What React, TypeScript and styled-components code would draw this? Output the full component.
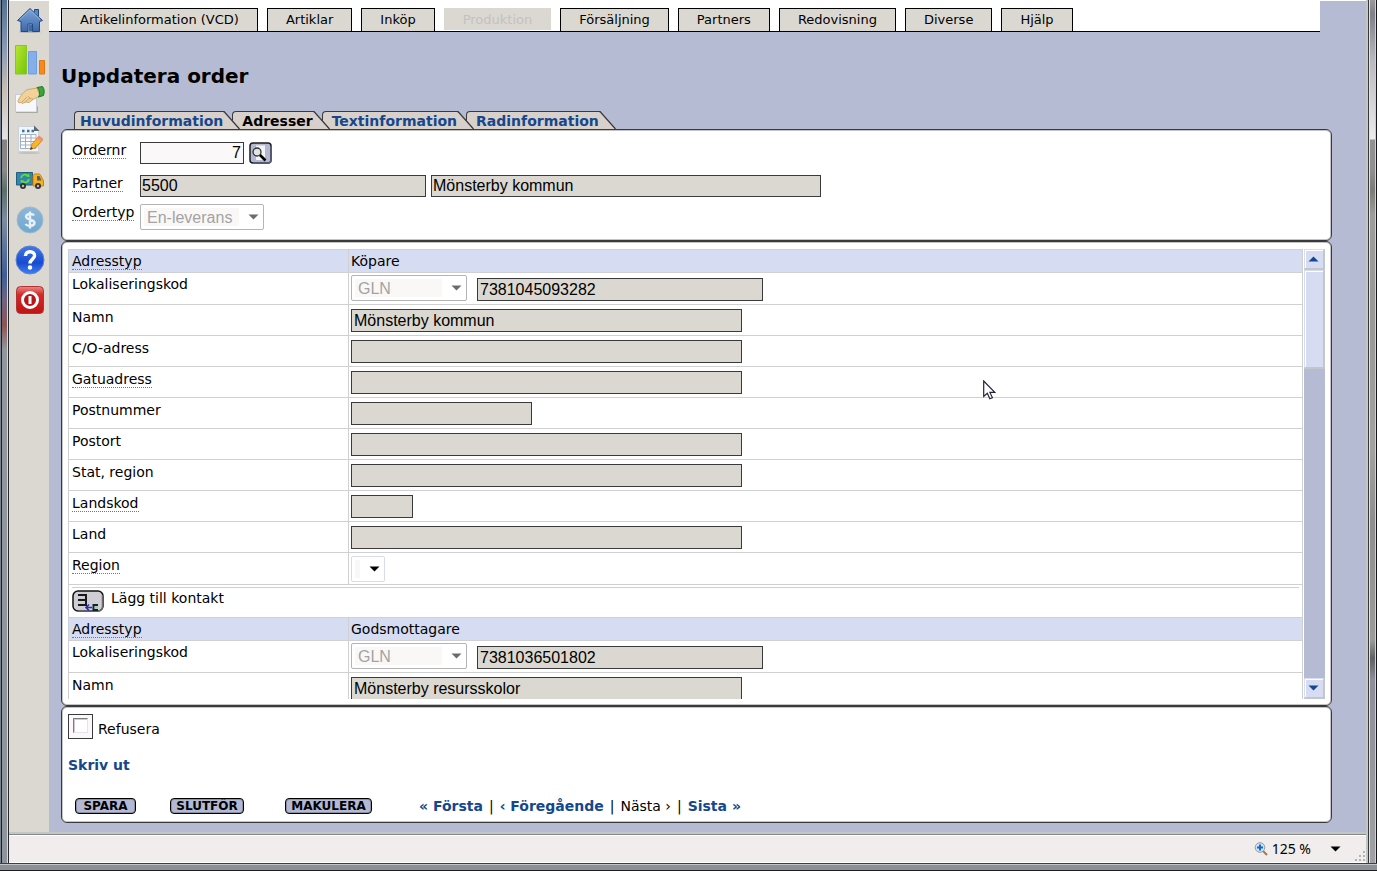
import React, { useRef } from "react";
import styled, { createGlobalStyle, css } from "styled-components";

const color = {
  page: "#b5bbd2",
  beige: "#dbd8d1",
  header: "#d6dcf1",
  link: "#15478c",
  line: "#d0d0d0",
  dark: "#3a3a3c",
};

const GlobalStyle = createGlobalStyle`
  * { box-sizing: border-box; }
  body {
    margin: 0;
    font: 14px/16px "DejaVu Sans", Verdana, sans-serif;
    color: #000;
    background: #8d9298;
  }
  button { font: inherit; color: inherit; cursor: pointer; }
`;

/* ---------- window chrome ---------- */

const Window = styled.div`
  display: flex;
  flex-direction: column;
  height: 100vh;
  min-height: 620px;
  border-bottom: 1px solid #1c1e22;
  overflow: hidden;
`;

const WindowBody = styled.div`
  display: flex;
  flex: 1;
  min-height: 0;
`;

const FrameLeft = styled.div`
  flex: none;
  width: 9px;
  border-left: 1px solid #77818f;
  border-right: 1px solid #25282c;
  background: linear-gradient(#51708f 0, #8b9bb4 50px, #c8bdb2 90px, #e4e4e6 139px, #85847f 140px, #8b8a88 170px,
    #5d6f68 190px, #7c8ca0 220px, #3e5e96 275px, #6f6480 300px, #8c5556 325px, #93979b 350px, #8f949b 100%);
  box-shadow: inset 1px 0 #1b2026, inset -1px 0 #d7d9dc;
`;

const FrameRight = styled.div`
  flex: none;
  width: 11px;
  border-left: 2px solid #c3c7c4;
  border-right: 1px solid #15171a;
  background: linear-gradient(#9a9a9c 0, #7f7f88 14px, #b8b8be 60px, #ececee 139px, #929292 140px, #8f8f8f 170px,
    #7b7c76 190px, #9d9d99 215px, #989895 320px, #a2a29e 450px, #8e8e8e 520px, #9b9b98 640px, #5f6062 658px,
    #8d8e98 680px, #a0a1a3 100%);
  box-shadow: inset 1px 0 #35373a, inset 2px 0 #e2e3e4, inset -1px 0 #ced0d2;
`;

const FrameBottom = styled.div`
  flex: none;
  height: 7px;
  border-top: 1px solid #3c4044;
  background: #8c9198;
  box-shadow: inset 0 1px #c2c5c8;
`;

const WindowColumn = styled.div`
  display: flex;
  flex: 1;
  flex-direction: column;
  min-width: 0;
`;

const Client = styled.div`
  display: flex;
  flex: 1;
  min-height: 0;
  background: ${color.page};
`;

const StatusBar = styled.footer`
  display: flex;
  flex: none;
  align-items: center;
  justify-content: flex-end;
  height: 31px;
  border-top: 2px solid #c3c7c4;
  background: #f0edec;
  box-shadow: inset 0 1px #84878b, inset 0 2px #fff, inset 0 -1px #fff;
`;

const ZoomButton = styled.button`
  display: flex;
  align-items: center;
  gap: 4px;
  border: 0;
  padding: 0;
  background: none;
  font: 14px/18px "Noto Sans", sans-serif;
`;

const ZoomMenu = styled.button`
  display: flex;
  border: 0;
  margin: 0 13px 0 19px;
  padding: 0;
  background: none;
`;

const Grip = styled.svg`
  align-self: flex-end;
`;

/* ---------- icon rail ---------- */

const Rail = styled.nav`
  display: flex;
  flex: none;
  flex-direction: column;
  gap: 8px;
  width: 40px;
  border-top: 1px solid #fff;
  border-left: 1px solid #d8dadb;
  padding: 3px 4px;
  background: ${color.beige};
`;

const RailButton = styled.button`
  display: flex;
  align-items: center;
  justify-content: center;
  height: 32px;
  border: 0;
  padding: 0;
  background: none;
`;

/* ---------- page ---------- */

const Page = styled.div`
  display: flex;
  flex: 1;
  flex-direction: column;
  min-width: 0;
  border-top: 1px solid #fff;
`;

const MenuBar = styled.nav`
  display: flex;
  flex: none;
  align-items: flex-end;
  gap: 9px;
  height: 31px;
  margin-right: 46px;
  padding-left: 12px;
  border-bottom: 1px solid #000;
  background: #fff;
`;

const MenuButton = styled.button`
  height: 23px;
  border: 1px solid #000;
  border-bottom: 0;
  padding: 0 18px;
  background: ${color.beige};
  font-size: 13px;
  line-height: 20px;
  white-space: nowrap;

  &:disabled {
    height: 22px;
    margin-bottom: 1px;
    border-color: ${color.beige};
    color: #c2c2c2;
    line-height: 18px;
    cursor: default;
  }
`;

const Main = styled.main`
  display: flex;
  flex: 1;
  flex-direction: column;
  min-height: 0;
  padding: 32px 34px 9px 12px;
`;

const Title = styled.h1`
  margin: 0 0 23px;
  font-size: 20px;
  line-height: 24px;
`;

const Tabs = styled.div`
  display: flex;
  flex: none;
  height: 18px;
  padding-left: 13px;
`;

const Tab = styled.div<{ $order: number }>`
  position: relative;
  z-index: ${(p) => 10 - p.$order};
  display: flex;
  margin-right: -8px;
`;

const TabLink = styled.a<{ $first?: boolean; $active?: boolean }>`
  border: solid ${color.dark};
  border-width: 1px 0 0 1px;
  border-top-left-radius: 4px;
  padding: 0 0 0 ${(p) => (p.$first ? 5 : 9)}px;
  background: #d8d0cb;
  color: ${(p) => (p.$active ? "#000" : color.link)};
  font-weight: bold;
  line-height: 19px;
  text-decoration: none;
  white-space: nowrap;
`;

const Panel = styled.section<{ $grow?: boolean }>`
  position: relative;
  border: 1px solid ${color.dark};
  border-radius: 6px;
  background: #fff;
  box-shadow: inset 0 0 0 1px #c4c4c4;
  ${(p) =>
    p.$grow
      ? css`
          display: flex;
          flex: 1;
          min-height: 0;
          padding: 7px 6px 6px;
        `
      : css`
          flex: none;
        `}
`;

const OrderPanel = styled(Panel)`
  padding: 12px 10px 10px;
`;

const FormRow = styled.div<{ $gap?: number }>`
  display: grid;
  grid-template-columns: 68px 1fr;
  margin-bottom: ${(p) => p.$gap ?? 0}px;
`;

const Fields = styled.div<{ $gap?: number }>`
  display: flex;
  align-items: flex-end;
  gap: ${(p) => p.$gap ?? 5}px;
`;

const Label = styled.label<{ $hint?: boolean }>`
  justify-self: start;
  align-self: start;
  display: inline-block;
  border-bottom: 1px ${(p) => (p.$hint ? "dotted #777" : "solid transparent")};
  white-space: nowrap;
`;

const TextBox = styled.input<{ $width: number }>`
  width: ${(p) => p.$width}px;
  height: 22px;
  border: 1px solid ${color.dark};
  border-radius: 0;
  padding: 0 1px;
  background: ${color.beige};
  color: #000;
  font: 16px/20px "Liberation Sans", Arial, sans-serif;
  outline: 0;
`;

const NumberBox = styled(TextBox)`
  background: #faf8f8;
  padding-right: 2px;
  text-align: right;
`;

const CellBox = styled(TextBox)`
  display: block;
  height: 23px;
  padding: 0 2px;
`;

const IconButton = styled.button`
  display: flex;
  border: 0;
  padding: 0;
  background: none;
`;

const SelectWrap = styled.span<{ $width: number }>`
  position: relative;
  display: block;
  width: ${(p) => p.$width}px;
  height: 26px;

  svg {
    position: absolute;
    top: 10px;
    right: 5px;
    pointer-events: none;
  }
`;

const SelectBox = styled.select`
  appearance: none;
  width: 100%;
  height: 100%;
  border: 1px solid #d9dbe6;
  border-radius: 2px;
  padding: 2px 0 0 6px;
  background: linear-gradient(#f9f8f7, #f9f8f7) no-repeat 3px 3px / calc(100% - 27px) calc(100% - 6px), #fff;
  color: #000;
  font: 16px/20px "Liberation Sans", Arial, sans-serif;

  &:disabled {
    border-color: #b4b4b4;
    color: #a3a3a3;
    opacity: 1;
  }
`;

/* ---------- address table ---------- */

const Scroller = styled.div`
  flex: 1;
  min-width: 0;
  overflow-y: auto;
  scrollbar-width: none;
`;

const AddressTable = styled.table`
  width: 100%;
  border-collapse: collapse;
  table-layout: fixed;
`;

const LabelColumn = styled.col`
  width: 280px;
`;

const Row = styled.tr<{ $height: number; $head?: boolean }>`
  height: ${(p) => p.$height}px;
  background: ${(p) => (p.$head ? color.header : "#fff")};
`;

const cell = css`
  border: 1px solid ${color.line};
  text-align: left;
  vertical-align: top;
  font-weight: normal;
`;

const HeadCell = styled.th<{ $top?: number }>`
  ${cell}
  padding: ${(p) => p.$top ?? 3}px 3px 0;
`;

const DataCell = styled.td<{ $top?: number }>`
  ${cell}
  padding: ${(p) => p.$top ?? 3}px 2px 0;
`;

const ContactCell = styled.td`
  ${cell}
  padding: 2px 3px 0;
`;

const ContactLine = styled.div`
  display: flex;
  gap: 7px;
  border-top: 1px solid ${color.line};
  padding-top: 2px;
`;

const Bar = styled.div`
  display: flex;
  flex: none;
  flex-direction: column;
  justify-content: space-between;
  width: 21px;
  margin-left: 1px;
  background: ${color.page};
`;

const bevel = css`
  border: 1px solid ${color.header};
  border-right: 2px solid #c3c7c8;
  border-bottom: 2px solid #c3c7c8;
  background: ${color.header};
  box-shadow: inset 1px 1px #fff;
`;

const BarButton = styled.button`
  ${bevel}
  display: flex;
  align-items: center;
  justify-content: center;
  width: 21px;
  height: 21px;
  padding: 0 2px 0 0;
`;

const Thumb = styled.div`
  ${bevel}
  height: 99px;
`;

/* ---------- bottom panel ---------- */

const ActionPanel = styled(Panel)`
  padding: 7px 6px 8px;
`;

const CheckRow = styled.div`
  display: flex;
  align-items: flex-end;
  gap: 5px;
  margin-bottom: 18px;
  line-height: 20px;
`;

const CheckFrame = styled.span`
  display: flex;
  align-items: flex-start;
  width: 25px;
  height: 25px;
  border: 1px solid ${color.dark};
  padding: 3px 4px;
  background: #faf8f8;
`;

const CheckBox = styled.input`
  appearance: none;
  width: 15px;
  height: 15px;
  margin: 0;
  border: 1px solid;
  border-color: #7d7d7d #e4e2ee #e4e2ee #7d7d7d;
  background: #fff;
  box-shadow: inset 1px 1px #d6c6d2;

  &:checked {
    background: ${color.link};
  }
`;

const BoldLink = styled.a`
  color: ${color.link};
  font-weight: bold;
  text-decoration: none;
`;

const Actions = styled.div`
  display: flex;
  align-items: center;
  margin-top: 25px;
  padding-left: 7px;
`;

const ActionButton = styled.button<{ $width: number; $gap: number }>`
  width: ${(p) => p.$width}px;
  height: 16px;
  margin-right: ${(p) => p.$gap}px;
  border: 1px solid #000;
  border-radius: 4px;
  padding: 1px 0 0;
  background: #b3b9d2;
  box-shadow: inset 0 0 0 1px #8c91a6;
  font-size: 12px;
  font-weight: bold;
  line-height: 13px;
`;

const Pager = styled.nav`
  display: flex;
  gap: 6px;
  white-space: nowrap;
`;

const Pointer = styled.svg`
  position: absolute;
  top: 138px;
  right: 335px;
  pointer-events: none;
`;

/* ---------- icons ---------- */

const HomeIcon = () => (
  <svg width="28" height="28" viewBox="0 0 28 28">
    <defs>
      <linearGradient id="home" x1="0" y1="0" x2="0" y2="1">
        <stop offset="0" stopColor="#7fa6d6" />
        <stop offset="1" stopColor="#3b68ab" />
      </linearGradient>
    </defs>
    <ellipse cx="14" cy="26" rx="11" ry="1" fill="#b9b6b0" />
    <path d="M18.500 6V3.500h4V10" fill="#5b86c0" stroke="#204a87" />
    <path d="M14 2.500 1.500 14.500 5 15.500V25.500H12V18h4.500v7.500H23.500V15.500L26.500 14.500Z" fill="url(#home)" stroke="#204a87" strokeLinejoin="round" />
    <path d="m4 13.500 10-9.500 10 9.500" fill="none" stroke="#8fb2de" />
    <path d="M12.500 18.500h3.500v7h-3.500Z" fill="#3f6aa8" />
  </svg>
);

const ChartIcon = () => (
  <svg width="30" height="30" viewBox="0 0 30 30">
    <defs>
      <linearGradient id="bar" x1="0" y1="0" x2="1" y2="1">
        <stop offset="0" stopColor="#b8e830" />
        <stop offset="1" stopColor="#74c40a" />
      </linearGradient>
    </defs>
    <path d="M.5.500h11v28.500H.500Z" fill="url(#bar)" stroke="#86c81c" />
    <path d="M13.500 6.500h8V29h-8Z" fill="#86aeea" stroke="#6f9ce0" />
    <path d="M24.500 15.500h5V29h-5Z" fill="#f58a1e" stroke="#e2750c" />
  </svg>
);

const HandIcon = () => (
  <svg width="30" height="28" viewBox="0 0 30 28">
    <path d="M.5 8.500h21v17.500H.500Z" fill="#f6f8fb" stroke="#c4ccd4" />
    <path d="M22.500 20.500V26.500H1" fill="none" stroke="#a9a9a4" />
    <path d="M3 15C5 10 9 5 13 3.500l9-1.500 3 8-7 3.500-4 3-3-.5-4 1.500-1-1.500-2 1Z" fill="#f0d29a" stroke="#c99a55" strokeWidth=".8" />
    <path d="m7 16 5-5m-2 5 5-4m3 1c-2 0-4-1-5-3" fill="none" stroke="#c99a55" strokeWidth=".8" />
    <path d="M22 1.500 27.500.500c2 2 2 6 1 9L23.500 11c2-3 1-7-1.500-9.500Z" fill="#39a53a" stroke="#1c7a24" />
  </svg>
);

const SheetIcon = () => (
  <svg width="26" height="30" viewBox="0 0 26 30">
    <ellipse cx="12" cy="28" rx="11" ry="1" fill="#c3c0ba" />
    <path d="M1.500 1.500H17L21.500 6v20.500H1.500Z" fill="#f2f5f8" stroke="#ccd2da" />
    <path d="M17 .500V6h5.500Z" fill="#5c6670" />
    <path d="M5 6h2.500M10 6h2.500M14.500 6H17" stroke="#2f77b5" strokeWidth="2.500" />
    <path d="M3.500 9.500h15.500v14H3.500ZM3.500 13H19M3.500 16.500H19M3.500 20H19M8.500 9.500v14M14 9.500v14" fill="#fff" stroke="#9fb0c2" />
    <path d="m13.500 24.500 1.500-5.500 7-8 4 3.500-7 8Z" fill="#f6b431" stroke="#d98b20" />
    <path d="m20 13 2-2.500 4 3.500-2 2.500Z" fill="#e88f86" />
    <path d="m13 25 1-3 2 1.500Z" fill="#4b3a2a" />
  </svg>
);

const TruckIcon = () => (
  <svg width="28" height="22" viewBox="0 -2 28 22">
    <path d="M.5 1.500h16V14H.500Z" fill="#3584a9" stroke="#1d5f82" />
    <path d="M5 7a4 4 0 0 1 7-2m1 3a4 4 0 0 1-7 2" fill="none" stroke="#5ce03c" strokeWidth="1.800" />
    <path d="m13 2.500.5 3.500-3.500-.500Zm-8 10-.5-3.500 3.500.500Z" fill="#5ce03c" />
    <path d="M17 14V5c0-1 1-2 2-2h4c1 0 1.500 1 2 2l2.500 5v5H17Z" fill="#f8b01c" stroke="#c98308" />
    <path d="M21 5h2.500l2 4.500H21Z" fill="#555f66" />
    <circle cx="7" cy="15" r="3" fill="#333" />
    <circle cx="22" cy="15" r="3" fill="#333" />
    <circle cx="7" cy="15" r="1.200" fill="#bbb" />
    <circle cx="22" cy="15" r="1.200" fill="#bbb" />
  </svg>
);

const DollarIcon = () => (
  <svg width="28" height="28" viewBox="0 0 28 28">
    <defs>
      <linearGradient id="coin" x1="0" y1="0" x2="0" y2="1">
        <stop offset="0" stopColor="#8fb6d6" />
        <stop offset="1" stopColor="#6fa8cf" />
      </linearGradient>
    </defs>
    <circle cx="14" cy="14" r="13" fill="url(#coin)" stroke="#9dbbd0" />
    <path d="M18 9.500C17 7.500 10.500 7 10 10.500c0 4 8.500 2.500 8.500 6.500-.5 3.500-7.500 3.500-9 1M14 5.500v17" fill="none" stroke="#e6f0f7" strokeWidth="2.400" />
  </svg>
);

const HelpIcon = () => (
  <svg width="30" height="30" viewBox="0 0 30 30">
    <defs>
      <linearGradient id="help" x1="0" y1="0" x2="0" y2="1">
        <stop offset="0" stopColor="#4378e8" />
        <stop offset=".6" stopColor="#174bd0" />
        <stop offset="1" stopColor="#3f7fee" />
      </linearGradient>
    </defs>
    <circle cx="15" cy="15" r="14" fill="url(#help)" stroke="#5d83cf" />
    <path d="M10.500 11c0-6 9.500-5.500 9 0-.5 3.500-4.500 3.500-4.500 7.500" fill="none" stroke="#fff" strokeWidth="3.400" />
    <circle cx="15" cy="22.500" r="2.200" fill="#fff" />
  </svg>
);

const PowerIcon = () => (
  <svg width="28" height="28" viewBox="0 0 28 28">
    <defs>
      <linearGradient id="power" x1="0" y1="0" x2="0" y2="1">
        <stop offset="0" stopColor="#e88a86" />
        <stop offset=".3" stopColor="#d42a2a" />
        <stop offset="1" stopColor="#c01414" />
      </linearGradient>
    </defs>
    <rect x=".5" y=".5" width="27" height="27" rx="4" fill="url(#power)" stroke="#b03434" />
    <circle cx="14" cy="14" r="7.500" fill="#b81616" stroke="#fff" strokeWidth="3" />
    <path d="M14 10v8" stroke="#fff" strokeWidth="3" />
  </svg>
);

const SearchIcon = () => (
  <svg width="23" height="22" viewBox="0 0 23 22">
    <rect x="1" y="1" width="21" height="20" rx="3" fill="#b3b9d2" stroke="#1c1c1e" strokeWidth="1.500" />
    <path d="M22 4v14q0 3-3 3H4" fill="none" stroke="#5b6073" strokeWidth="1.500" />
    <path d="M7 3.500h9v14.500H7Z" fill="#f4f4f4" />
    <circle cx="8" cy="10" r="4" fill="#dfe3e6" stroke="#333" strokeWidth="1.300" />
    <path d="m11 13 5.500 5.500" stroke="#000" strokeWidth="2.600" />
  </svg>
);

const AddContactIcon = () => (
  <svg width="32" height="22" viewBox="0 0 32 22">
    <rect x="1" y="1" width="30" height="20" rx="5" fill="#cfced4" stroke="#111" strokeWidth="1.500" />
    <path d="M30.500 5v11q0 5-5 5H6" fill="none" stroke="#6b6b70" strokeWidth="1.500" />
    <path d="M6 5h8v10H6M6 10h8" fill="none" stroke="#1a1a1a" strokeWidth="2" />
    <path d="M14 17.500h6M17 14.500l-3 3 3 3" fill="none" stroke="#2b2bb8" strokeWidth="1.600" />
    <path d="M26 15h-4.500v5H26" fill="none" stroke="#123" strokeWidth="2" />
    <path d="M22.500 16.500H26v2h-3.500Z" fill="#7fe08a" />
  </svg>
);

const Caret = ({ fill = "#000", up = false }: { fill?: string; up?: boolean }) => (
  <svg width="11" height="6" viewBox="0 0 11 6">
    <path d={up ? "M.5 5.500h10L5.500.500Z" : "M.5.500h10l-5 5Z"} fill={fill} />
  </svg>
);

const Magnifier = () => (
  <svg width="14" height="14" viewBox="0 0 14 14">
    <path d="m9 9 4 4" stroke="#a8764e" strokeWidth="2" />
    <circle cx="6" cy="5.500" r="4.800" fill="#cfe4f8" stroke="#8f9aa6" />
    <path d="M6 2.500v6M3 5.500h6" stroke="#1769c4" strokeWidth="2" />
  </svg>
);

const rail = [
  { name: "Hem", Icon: HomeIcon },
  { name: "Statistik", Icon: ChartIcon },
  { name: "Lämna", Icon: HandIcon },
  { name: "Redigera", Icon: SheetIcon },
  { name: "Leverans", Icon: TruckIcon },
  { name: "Ekonomi", Icon: DollarIcon },
  { name: "Hjälp", Icon: HelpIcon },
  { name: "Logga ut", Icon: PowerIcon },
];

const menu = [
  "Artikelinformation (VCD)",
  "Artiklar",
  "Inköp",
  "Produktion",
  "Försäljning",
  "Partners",
  "Redovisning",
  "Diverse",
  "Hjälp",
];

const tabs = ["Huvudinformation", "Adresser", "Textinformation", "Radinformation"];

type Address = { id: string; type: string; gln: string; name: string; full?: boolean };

const addresses: Address[] = [
  { id: "buyer", type: "Köpare", gln: "7381045093282", name: "Mönsterby kommun", full: true },
  { id: "receiver", type: "Godsmottagare", gln: "7381036501802", name: "Mönsterby resursskolor" },
];

const fields = [
  { key: "co", label: "C/O-adress", width: 391 },
  { key: "street", label: "Gatuadress", width: 391, hint: true },
  { key: "zip", label: "Postnummer", width: 181 },
  { key: "city", label: "Postort", width: 391 },
  { key: "state", label: "Stat, region", width: 391 },
  { key: "code", label: "Landskod", width: 62, hint: true },
  { key: "country", label: "Land", width: 391 },
];

type SelectProps = { id: string; value: string; width: number; disabled?: boolean; label?: string };

const Select = ({ id, value, width, disabled, label }: SelectProps) => (
  <SelectWrap $width={width}>
    <SelectBox id={id} disabled={disabled} aria-label={label}>
      <option>{value}</option>
    </SelectBox>
    <Caret fill={disabled ? "#6c6c6c" : "#000"} />
  </SelectWrap>
);

type FieldRowProps = { id: string; label: string; width: number; value?: string; hint?: boolean };

const FieldRow = ({ id, label, width, value = "", hint }: FieldRowProps) => (
  <Row $height={31}>
    <HeadCell scope="row" $top={4}>
      <Label htmlFor={id} $hint={hint}>{label}</Label>
    </HeadCell>
    <DataCell $top={4}>
      <CellBox id={id} $width={width} defaultValue={value} readOnly />
    </DataCell>
  </Row>
);

const AddressRows = ({ address }: { address: Address }) => {
  const { id, type, gln, name, full } = address;
  return (
    <tbody>
      <Row $height={23} $head>
        <HeadCell scope="row">
          <Label as="span" $hint>Adresstyp</Label>
        </HeadCell>
        <DataCell>{type}</DataCell>
      </Row>
      <Row $height={32}>
        <HeadCell scope="row">
          <Label htmlFor={`${id}-gln`}>Lokaliseringskod</Label>
        </HeadCell>
        <DataCell $top={2}>
          <Fields $gap={10}>
            <Select id={`${id}-kind`} label="Kodtyp" value="GLN" width={116} disabled />
            <CellBox id={`${id}-gln`} $width={286} defaultValue={gln} readOnly />
          </Fields>
        </DataCell>
      </Row>
      <FieldRow id={`${id}-name`} label="Namn" width={391} value={name} />
      {full && (
        <>
          {fields.map((f) => (
            <FieldRow key={f.key} id={`${id}-${f.key}`} label={f.label} width={f.width} hint={f.hint} />
          ))}
          <Row $height={32}>
            <HeadCell scope="row" $top={4}>
              <Label htmlFor={`${id}-region`} $hint>Region</Label>
            </HeadCell>
            <DataCell>
              <Select id={`${id}-region`} value="" width={34} />
            </DataCell>
          </Row>
          <Row $height={33}>
            <ContactCell colSpan={2}>
              <ContactLine>
                <IconButton type="button" aria-label="Lägg till kontakt">
                  <AddContactIcon />
                </IconButton>
                <span>Lägg till kontakt</span>
              </ContactLine>
            </ContactCell>
          </Row>
        </>
      )}
    </tbody>
  );
};

export default function App() {
  const scroller = useRef<HTMLDivElement>(null);
  const scroll = (by: number) => scroller.current?.scrollBy({ top: by });

  return (
    <>
      <GlobalStyle />
      <Window>
        <WindowBody>
          <FrameLeft />
          <WindowColumn>
            <Client>
              <Rail>
                {rail.map(({ name, Icon }) => (
                  <RailButton key={name} type="button" aria-label={name}>
                    <Icon />
                  </RailButton>
                ))}
              </Rail>
              <Page>
                <MenuBar>
                  {menu.map((item) => (
                    <MenuButton key={item} type="button" disabled={item === "Produktion"}>
                      {item}
                    </MenuButton>
                  ))}
                </MenuBar>
                <Main>
                  <Title>Uppdatera order</Title>
                  <Tabs>
                    {tabs.map((tab, i) => (
                      <Tab key={tab} $order={i}>
                        <TabLink href="#" $first={i === 0} $active={i === 1}>{tab}</TabLink>
                        <svg width="17" height="18" viewBox="0 0 17 18">
                          <path d="M0 0h1l16 18H0Z" fill="#d8d0cb" />
                          <path d="M0 .500h1L16.500 18" fill="none" stroke={color.dark} strokeWidth="1.300" />
                        </svg>
                      </Tab>
                    ))}
                  </Tabs>
                  <OrderPanel>
                    <FormRow $gap={11}>
                      <Label htmlFor="order-number" $hint>Ordernr</Label>
                      <Fields>
                        <NumberBox id="order-number" $width={104} defaultValue="7" />
                        <IconButton type="button" aria-label="Sök order">
                          <SearchIcon />
                        </IconButton>
                      </Fields>
                    </FormRow>
                    <FormRow $gap={7}>
                      <Label htmlFor="partner" $hint>Partner</Label>
                      <Fields>
                        <TextBox id="partner" $width={286} defaultValue="5500" readOnly />
                        <TextBox aria-label="Partnernamn" $width={390} defaultValue="Mönsterby kommun" readOnly />
                      </Fields>
                    </FormRow>
                    <FormRow>
                      <Label htmlFor="order-type" $hint>Ordertyp</Label>
                      <Select id="order-type" value="En-leverans" width={124} disabled />
                    </FormRow>
                  </OrderPanel>
                  <Panel $grow>
                    <Scroller ref={scroller}>
                      <AddressTable>
                        <colgroup>
                          <LabelColumn />
                          <col />
                        </colgroup>
                        {addresses.map((a) => (
                          <AddressRows key={a.id} address={a} />
                        ))}
                      </AddressTable>
                    </Scroller>
                    <Bar>
                      <div>
                        <BarButton type="button" aria-label="Rulla upp" onClick={() => scroll(-62)}>
                          <Caret up fill={color.link} />
                        </BarButton>
                        <Thumb />
                      </div>
                      <BarButton type="button" aria-label="Rulla ned" onClick={() => scroll(62)}>
                        <Caret fill={color.link} />
                      </BarButton>
                    </Bar>
                    <Pointer width="13" height="20" viewBox="0 0 13 20">
                      <path d="M.7 1v15.500l3.600-3.300 2.500 5.600 2.600-1.200-2.500-5.200h4.900Z" fill="#fff" stroke="#23233a" strokeWidth="1.200" />
                    </Pointer>
                  </Panel>
                  <ActionPanel>
                    <CheckRow>
                      <CheckFrame>
                        <CheckBox id="refuse" type="checkbox" />
                      </CheckFrame>
                      <label htmlFor="refuse">Refusera</label>
                    </CheckRow>
                    <BoldLink href="#">Skriv ut</BoldLink>
                    <Actions>
                      <ActionButton type="button" $width={61} $gap={34}>SPARA</ActionButton>
                      <ActionButton type="button" $width={74} $gap={41}>SLUTFÖR</ActionButton>
                      <ActionButton type="button" $width={87} $gap={47}>MAKULERA</ActionButton>
                      <Pager>
                        <BoldLink href="#">« Första</BoldLink>
                        <span>|</span>
                        <BoldLink href="#">‹ Föregående</BoldLink>
                        <span>|</span>
                        <span>Nästa ›</span>
                        <span>|</span>
                        <BoldLink href="#">Sista »</BoldLink>
                      </Pager>
                    </Actions>
                  </ActionPanel>
                </Main>
              </Page>
            </Client>
            <StatusBar>
              <ZoomButton type="button">
                <Magnifier />
                125 %
              </ZoomButton>
              <ZoomMenu type="button" aria-label="Zoomnivå">
                <Caret />
              </ZoomMenu>
              <Grip width="12" height="12" viewBox="0 0 12 12">
                <path d="M9 0h2v2H9zM5 4h2v2H5zM9 4h2v2H9zM1 8h2v2H1zM5 8h2v2H5zM9 8h2v2H9z" fill="#b4b4b4" />
              </Grip>
            </StatusBar>
          </WindowColumn>
          <FrameRight />
        </WindowBody>
        <FrameBottom />
      </Window>
    </>
  );
}
